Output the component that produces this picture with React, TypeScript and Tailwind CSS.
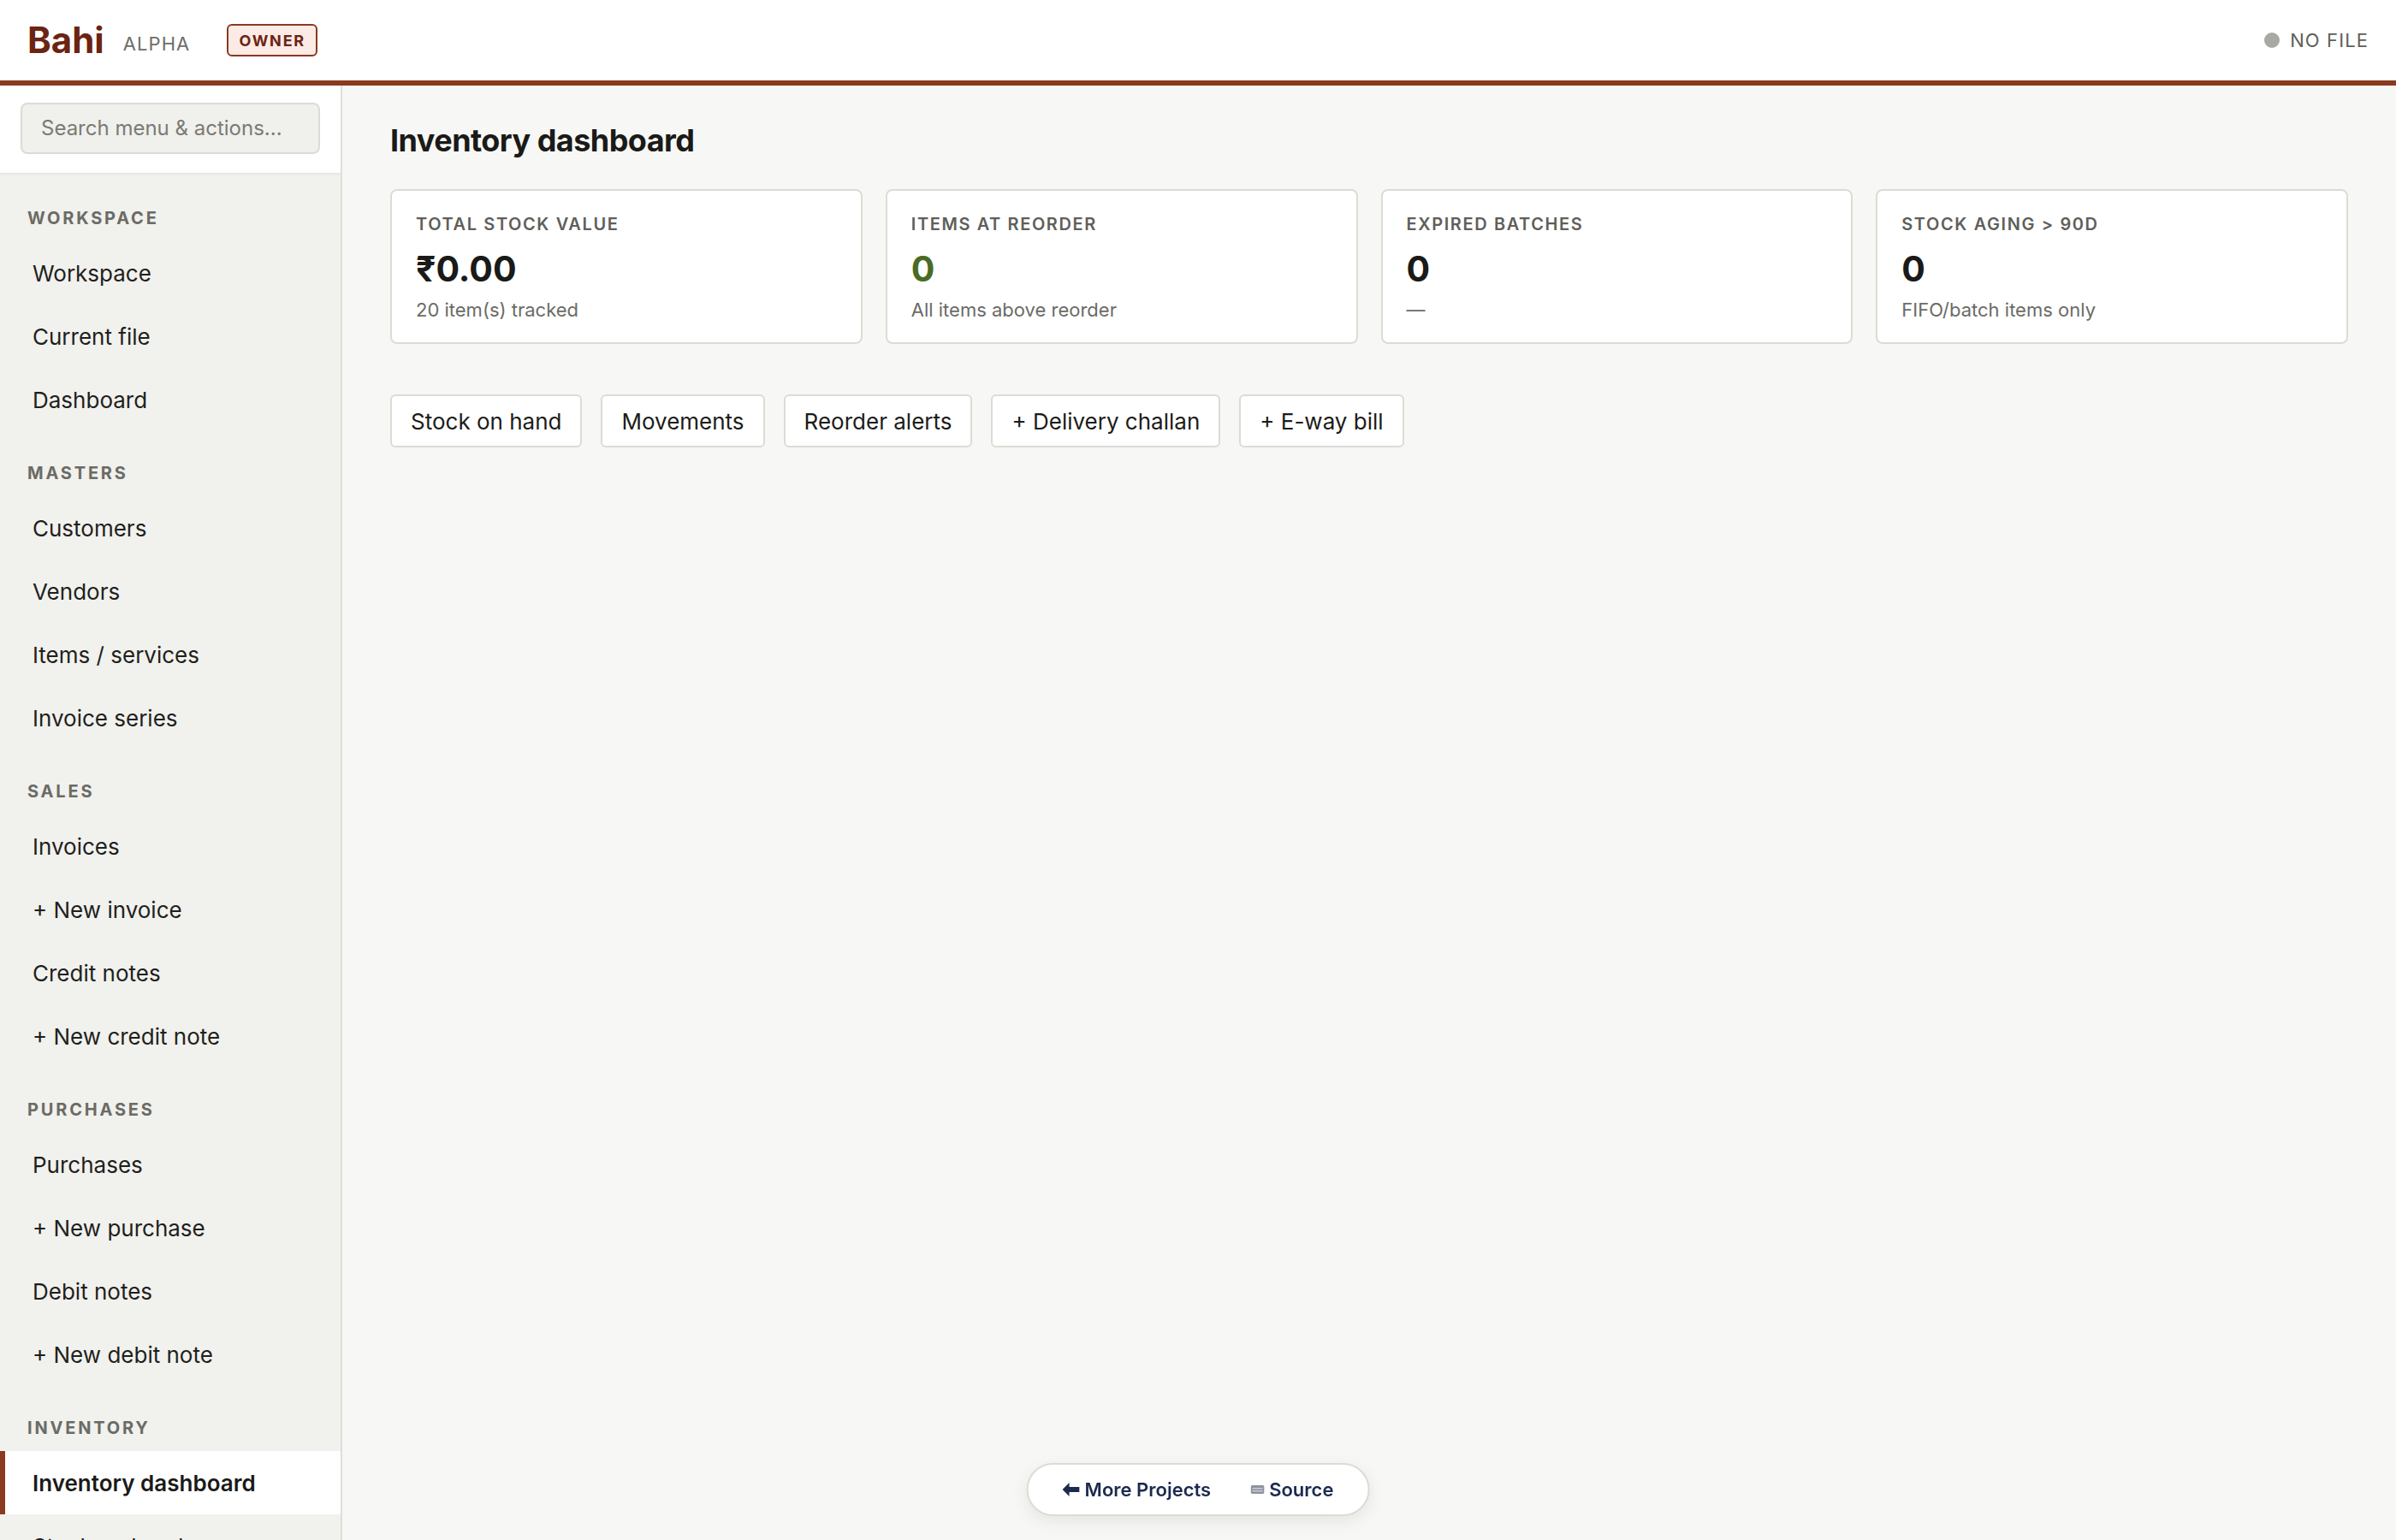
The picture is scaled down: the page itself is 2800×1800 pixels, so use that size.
import { ReactNode } from 'react'

type NavItem = { label: string; active?: boolean }
type NavSection = { title: string; items: NavItem[] }

const sections: NavSection[] = [
  { title: 'Workspace', items: [{ label: 'Workspace' }, { label: 'Current file' }, { label: 'Dashboard' }] },
  {
    title: 'Masters',
    items: [{ label: 'Customers' }, { label: 'Vendors' }, { label: 'Items / services' }, { label: 'Invoice series' }],
  },
  {
    title: 'Sales',
    items: [{ label: 'Invoices' }, { label: '+ New invoice' }, { label: 'Credit notes' }, { label: '+ New credit note' }],
  },
  {
    title: 'Purchases',
    items: [{ label: 'Purchases' }, { label: '+ New purchase' }, { label: 'Debit notes' }, { label: '+ New debit note' }],
  },
  {
    title: 'Inventory',
    items: [
      { label: 'Inventory dashboard', active: true },
      { label: 'Stock on hand' },
      { label: 'Movements' },
      { label: 'Reorder alerts' },
    ],
  },
]

const stats: { label: string; value: string; sub: string; green?: boolean }[] = [
  { label: 'Total stock value', value: '₹0.00', sub: '20 item(s) tracked' },
  { label: 'Items at reorder', value: '0', sub: 'All items above reorder', green: true },
  { label: 'Expired batches', value: '0', sub: '—' },
  { label: 'Stock aging > 90d', value: '0', sub: 'FIFO/batch items only' },
]

const actions = ['Stock on hand', 'Movements', 'Reorder alerts', '+ Delivery challan', '+ E-way bill']

function StatCard({ label, value, sub, green }: { label: string; value: ReactNode; sub: string; green?: boolean }) {
  return (
    <div className="bg-white border-2 border-[#dcdcd6] rounded-[8px] px-[28px] pt-[28px] pb-[26px]">
      <div className="text-[20px] leading-[22px] font-semibold uppercase tracking-[0.08em] text-[#5f5f5a]">{label}</div>
      <div
        className={`mt-[17px] text-[41px] leading-[48px] font-bold ${green ? 'text-[#4a6b24]' : 'text-[#1a1a18]'}`}
      >
        {value}
      </div>
      <div className="mt-[12px] text-[22px] leading-[24px] text-[#6b6b66]">{sub}</div>
    </div>
  )
}

export default function App() {
  return (
    <div className="h-screen flex flex-col overflow-hidden bg-[#f7f7f5] font-['Inter','Noto_Sans',sans-serif] text-[#1c1c1a]">
      {/* top bar */}
      <header className="h-[100px] flex-shrink-0 bg-white border-b-[6px] border-[#8a3a1f] flex items-center justify-between px-8">
        <div className="flex items-center">
          <span className="text-[42px] leading-none font-bold text-[#6b2412]">Bahi</span>
          <span className="ml-[22px] mt-[8px] text-[22px] leading-none tracking-[0.05em] text-[#6d6d68]">ALPHA</span>
          <span className="ml-[43px] px-[12px] h-[38px] flex items-center rounded-[6px] border-2 border-[#8b3a1f] bg-[#fbeae5] text-[18px] font-bold tracking-[0.1em] text-[#6b2412]">
            OWNER
          </span>
        </div>
        <div className="flex items-center gap-[12px]">
          <span className="w-[18px] h-[18px] rounded-full bg-[#a8a8a4]" />
          <span className="text-[22px] tracking-[0.05em] text-[#5f5f5a]">NO FILE</span>
        </div>
      </header>

      <div className="flex-1 flex min-h-0">
        {/* sidebar */}
        <aside className="w-[400px] flex-shrink-0 bg-[#f1f1ed] border-r-2 border-[#deded8] flex flex-col overflow-hidden">
          <div className="bg-white px-[24px] pt-[20px] pb-[22px] border-b border-[#e6e6e1] shadow-[0_2px_4px_rgba(0,0,0,0.03)]">
            <div className="h-[60px] rounded-[8px] border-2 border-[#dcdcd6] bg-[#f0f0ec] flex items-center px-[22px] text-[24px] whitespace-nowrap overflow-hidden text-[#7a7a75]">
              Search menu &amp; actions...
            </div>
          </div>
          <nav className="pt-[3px]">
            {sections.map((s) => (
              <div key={s.title} className="pt-[37px]">
                <div className="pl-8 text-[20px] leading-[24px] font-bold uppercase tracking-[0.14em] text-[#6b6b66]">
                  {s.title}
                </div>
                <div className="mt-[15px]">
                  {s.items.map((it) => (
                    <div
                      key={it.label}
                      className={`h-[74px] flex items-center pl-8 border-l-[6px] text-[26px] whitespace-nowrap ${
                        it.active ? 'bg-white border-[#8a3a1f] font-semibold text-[#1a1a18]' : 'border-transparent text-[#1f1f1d]'
                      }`}
                    >
                      {it.label}
                    </div>
                  ))}
                </div>
              </div>
            ))}
          </nav>
        </aside>

        {/* main */}
        <main className="flex-1 min-w-0 px-[56px] pt-[40px]">
          <h1 className="text-[36px] leading-[48px] font-bold tracking-[-0.015em] text-[#1a1a18]">Inventory dashboard</h1>
          <div className="mt-[33px] grid grid-cols-4 gap-[27px]">
            {stats.map((s) => (
              <StatCard key={s.label} {...s} />
            ))}
          </div>
          <div className="mt-[59px] flex gap-[22px]">
            {actions.map((a) => (
              <button
                key={a}
                className="h-[62px] px-[22px] bg-white border-2 border-[#dcdcd6] rounded-[6px] text-[26px] text-[#1c1c1a] whitespace-nowrap"
              >
                {a}
              </button>
            ))}
          </div>
        </main>
      </div>

      {/* floating links */}
      <div className="fixed bottom-[28px] left-1/2 -translate-x-1/2 h-[62px] px-[40px] flex items-center gap-[46px] bg-white border-2 border-[#dcdcd6] rounded-full shadow-[0_6px_20px_rgba(0,0,0,0.08)] text-[22px] font-semibold text-[#1b2a4e]">
        <span className="flex items-center gap-[6px]">
          <svg width="20" height="16" viewBox="0 0 20 16">
            <path d="M0 8 L8 0 L8 5 L20 5 L20 11 L8 11 L8 16 Z" fill="#1b2a4e" />
          </svg>
          More Projects
        </span>
        <span className="flex items-center gap-[6px]">
          <svg width="16" height="10" viewBox="0 0 16 10">
            <rect x="0" y="0" width="16" height="10" rx="2" fill="#8d93a0" />
            <rect x="2" y="3" width="12" height="1.5" fill="#c8ccd4" />
            <rect x="2" y="6" width="12" height="1.5" fill="#c8ccd4" />
          </svg>
          Source
        </span>
      </div>
    </div>
  )
}
